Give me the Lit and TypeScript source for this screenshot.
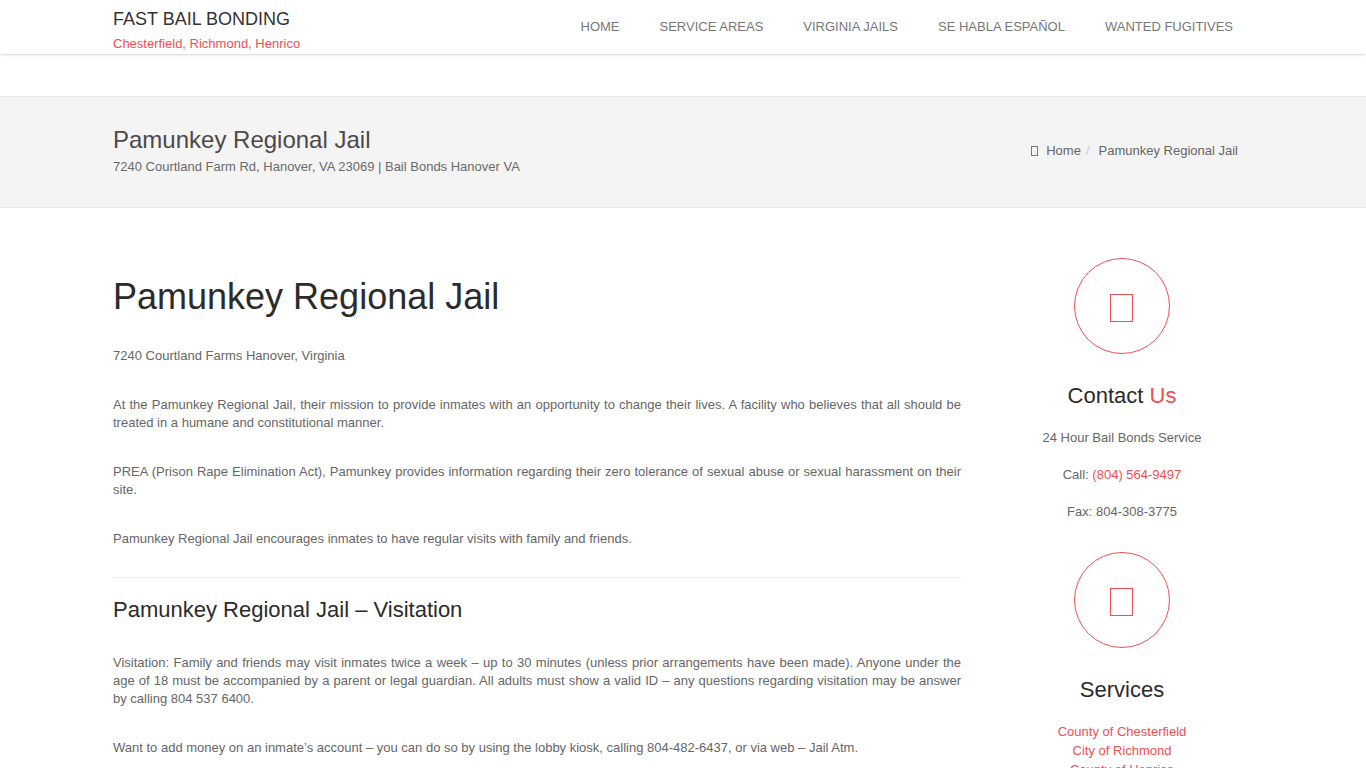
import { LitElement, html, css } from 'lit';
import { customElement } from 'lit/decorators.js';

const NAV = ['HOME', 'SERVICE AREAS', 'VIRGINIA JAILS', 'SE HABLA ESPAÑOL', 'WANTED FUGITIVES'];

@customElement('app-root')
export class AppRoot extends LitElement {
    static styles = css`
    :host {
      display: block;
      background: #fff;
      font-family: "Liberation Sans", Arial, sans-serif;
      font-size: 13px;
      line-height: 18.2px;
      color: #666;
    }

    .container {
      width: 1140px;
      margin: 0 auto;
    }

    header {
      height: 54px;
      background: #fff;
      box-shadow: 0 1px 3px -1px rgba(0, 0, 0, 0.3);
      margin: 0 0 42px;
    }

    header .container {
      display: flex;
      justify-content: space-between;
    }

    .brand {
      padding-top: 9px;
    }

    .brand-name {
      font-size: 18px;
      line-height: 20px;
      color: #333;
    }

    .brand-sub {
      margin-top: 6px;
      font-size: 13px;
      line-height: 18px;
      color: #f04e51;
    }

    nav {
      display: flex;
      gap: 40px;
      padding: 18px 20px 0 0;
      font-size: 13px;
      line-height: 18px;
      color: #777;
    }

    .title-bar {
      height: 110px;
      background: #f4f4f4;
      border-top: 1px solid #e8e8e8;
      border-bottom: 1px solid #e8e8e8;
    }

    .title-bar .container {
      display: flex;
      justify-content: space-between;
      align-items: center;
      height: 100%;
    }

    .title-bar h2 {
      margin: 0 0 4px;
      font-size: 24px;
      line-height: 28px;
      font-weight: 400;
      color: #4a4a4a;
    }

    .title-bar p {
      margin: 3px 0 1px;
      color: #6a6a6a;
    }

    .crumbs {
      display: flex;
      align-items: center;
      padding: 0 15px 1px 0;
      color: #666;
    }

    .crumb-icon {
      width: 5px;
      height: 8px;
      border: 1px solid #777;
      margin-right: 8px;
    }

    .crumb-sep {
      margin: 0 9px 0 5px;
      color: #ccc;
    }

    .layout {
      display: grid;
      grid-template-columns: 848px 1fr;
      column-gap: 15px;
      padding-top: 50px;
    }

    .content h1 {
      margin: 19px 0 0;
      font-size: 36px;
      line-height: 40px;
      font-weight: 400;
      color: #2b2b2b;
    }

    .content p {
      margin: 0 0 30.5px;
      text-align: justify;
    }

    .content h1 + p {
      margin-top: 30px;
    }

    .content hr {
      border: 0;
      border-top: 1px solid #eee;
      margin: -1px 0 18px;
    }

    .content h3 {
      margin: 0 0 29.6px;
      font-size: 22px;
      line-height: 28px;
      font-weight: 400;
      color: #2b2b2b;
    }

    .side {
      text-align: center;
      margin-right: -15px;
    }

    .circle {
      box-sizing: border-box;
      width: 96px;
      height: 96px;
      margin: 0 auto;
      border: 1px solid #f04e51;
      border-radius: 50%;
      display: flex;
      align-items: center;
      justify-content: center;
    }

    .glyph {
      box-sizing: border-box;
      width: 23px;
      height: 28px;
      margin: 4px 1px 0 0;
      border: 1px solid #f04e51;
    }

    .side h3 {
      margin: 29px 0 0;
      font-size: 22px;
      line-height: 26px;
      font-weight: 400;
      color: #2b2b2b;
    }

    .side p {
      margin: 0;
      padding-top: 19px;
    }

    .side h3 + p {
      padding-top: 20px;
    }

    .block {
      margin-bottom: 30px;
    }

    .red {
      color: #f04e51;
    }

    .links {
      padding-top: 19px;
      line-height: 19px;
      color: #f04e51;
    }
  `;

    render() {
        return html`
      <header>
        <div class="container">
          <div class="brand">
            <div class="brand-name">FAST BAIL BONDING</div>
            <div class="brand-sub">Chesterfield, Richmond, Henrico</div>
          </div>
          <nav>${NAV.map((item) => html`<span>${item}</span>`)}</nav>
        </div>
      </header>

      <section class="title-bar">
        <div class="container">
          <div>
            <h2>Pamunkey Regional Jail</h2>
            <p>7240 Courtland Farm Rd, Hanover, VA 23069 | Bail Bonds Hanover VA</p>
          </div>
          <div class="crumbs">
            <span class="crumb-icon"></span>
            <span>Home</span>
            <span class="crumb-sep">/</span>
            <span>Pamunkey Regional Jail</span>
          </div>
        </div>
      </section>

      <div class="container layout">
        <main class="content">
          <h1>Pamunkey Regional Jail</h1>
          <p>7240 Courtland Farms Hanover, Virginia</p>
          <p>At the Pamunkey Regional Jail, their mission to provide inmates with an opportunity to change their lives. A facility who believes that all should be treated in a humane and constitutional manner.</p>
          <p>PREA (Prison Rape Elimination Act), Pamunkey provides information regarding their zero tolerance of sexual abuse or sexual harassment on their site.</p>
          <p>Pamunkey Regional Jail encourages inmates to have regular visits with family and friends.</p>
          <hr />
          <h3>Pamunkey Regional Jail – Visitation</h3>
          <p>Visitation: Family and friends may visit inmates twice a week – up to 30 minutes (unless prior arrangements have been made). Anyone under the age of 18 must be accompanied by a parent or legal guardian. All adults must show a valid ID – any questions regarding visitation may be answer by calling 804 537 6400.</p>
          <p>Want to add money on an inmate’s account – you can do so by using the lobby kiosk, calling 804-482-6437, or via web – Jail Atm.</p>
        </main>

        <aside class="side">
          <div class="block">
            <div class="circle"><span class="glyph"></span></div>
            <h3>Contact <span class="red">Us</span></h3>
            <p>24 Hour Bail Bonds Service</p>
            <p>Call: <span class="red">(804) 564-9497</span></p>
            <p>Fax: 804-308-3775</p>
          </div>
          <div class="block">
            <div class="circle"><span class="glyph"></span></div>
            <h3>Services</h3>
            <div class="links">
              <div>County of Chesterfield</div>
              <div>City of Richmond</div>
              <div>County of Henrico</div>
            </div>
          </div>
        </aside>
      </div>
    `;
    }
}

declare global {
    interface HTMLElementTagNameMap {
        'app-root': AppRoot;
    }
}
